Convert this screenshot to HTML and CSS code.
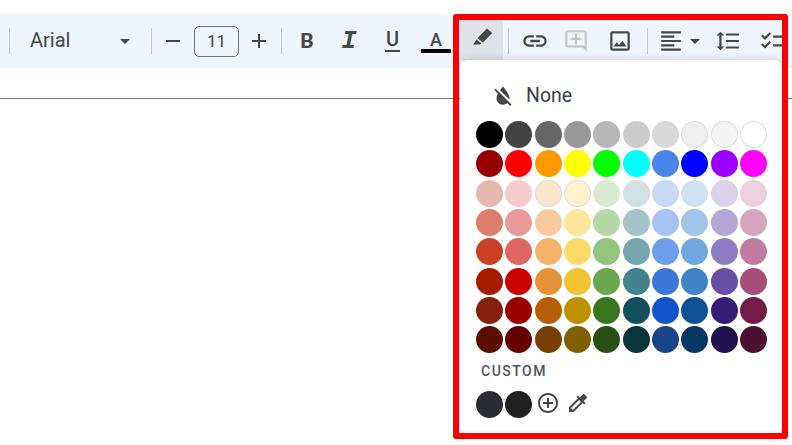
FILE: index.html
```html
<!DOCTYPE html>
<html lang="en">
<head>
    <meta charset="UTF-8">
    <title>Highlight color</title>
    <link rel="stylesheet" href="styles.css">
</head>
<body>
    <div class="toolbar">
        <span class="sep sep-first"></span>
        <div class="font-select">
            <span class="font-name">Arial</span>
            <span class="caret"></span>
        </div>
        <span class="sep"></span>
        <svg class="icon icon-minus" viewBox="0 0 24 24"><path d="M5 11h14v2H5z"/></svg>
        <div class="size-box">11</div>
        <svg class="icon icon-plus" viewBox="0 0 24 24"><path d="M19 13h-6v6h-2v-6H5v-2h6V5h2v6h6v2z"/></svg>
        <span class="sep sep-format"></span>
        <span class="fmt fmt-b">B</span>
        <span class="fmt fmt-i">I</span>
        <span class="fmt fmt-u">U</span>
        <span class="fmt fmt-a">A</span>
        <div class="pen-button">
            <svg class="icon" viewBox="0 0 24 24"><path d="M17 4.500 22.200 9 13 18.500 7.500 14zM6.500 15.500 11.500 19.500 10 20.500H3.200z"/></svg>
        </div>
        <span class="sep sep-link"></span>
        <svg class="icon icon-link" viewBox="0 0 24 24"><path d="M3.900 12c0-1.710 1.390-3.100 3.100-3.100h4V7H7c-2.760 0-5 2.240-5 5s2.240 5 5 5h4v-1.900H7c-1.710 0-3.100-1.390-3.100-3.100zM8 13h8v-2H8v2zm9-6h-4v1.900h4c1.710 0 3.100 1.390 3.100 3.100s-1.390 3.100-3.100 3.100h-4V17h4c2.760 0 5-2.240 5-5s-2.240-5-5-5z"/></svg>
        <svg class="icon icon-comment" viewBox="0 0 24 24"><path d="M22 4c0-1.100-.9-2-2-2H4c-1.100 0-2 .9-2 2v12c0 1.100.9 2 2 2h14l4 4V4zm-2 13.170L18.830 16H4V4h16v13.170zM13 5h-2v4H7v2h4v4h2v-4h4V9h-4z"/></svg>
        <svg class="icon icon-image" viewBox="0 0 24 24"><path d="M19 5v14H5V5h14m0-2H5c-1.100 0-2 .9-2 2v14c0 1.100.9 2 2 2h14c1.100 0 2-.9 2-2V5c0-1.100-.9-2-2-2zm-4.860 8.860l-3 3.870L9 13.140 6 17h12l-3.860-5.140z"/></svg>
        <span class="sep sep-align"></span>
        <svg class="icon icon-align" viewBox="0 0 24 24"><path d="M15 15H3v2h12v-2zm0-8H3v2h12V7zM3 13h18v-2H3v2zm0 8h18v-2H3v2zM3 3v2h18V3H3z"/></svg>
        <span class="caret caret-align"></span>
        <svg class="icon icon-spacing" viewBox="0 0 24 24"><path d="M6 7h2.500L5 3.500 1.500 7H4v10H1.500L5 20.500 8.500 17H6V7zm4-2v2h12V5H10zm0 14h12v-2H10v2zm0-6h12v-2H10v2z"/></svg>
        <svg class="icon icon-check" viewBox="0 0 24 24"><path d="M22 7h-9v2h9V7zm0 8h-9v2h9v-2zM5.540 11L2 7.460l1.410-1.410 2.120 2.120 4.240-4.240 1.410 1.410L5.540 11zm0 8L2 15.460l1.410-1.410 2.120 2.120 4.240-4.240 1.410 1.410L5.540 19z"/></svg>
    </div>
    <div class="ruler-line"></div>

    <div class="color-popup">
        <div class="none-row">
            <svg class="icon icon-none" viewBox="0 0 24 24"><path d="M18 14c0-4-6-10.800-6-10.800s-1.330 1.510-2.730 3.520l8.590 8.590c.09-.42.14-.86.14-1.310zm-.88 3.120L12.500 12.500 5.270 5.270 4 6.550l3.320 3.320C6.550 11.320 6 12.790 6 14c0 3.310 2.690 6 6 6 1.520 0 2.900-.57 3.960-1.500l2.630 2.630 1.270-1.270-2.740-2.740z"/></svg>
            <span>None</span>
        </div>
        <div class="swatches" id="swatches"></div>
        <div class="custom-label">CUSTOM</div>
        <div class="custom-row">
            <span class="swatch custom-one"></span>
            <span class="swatch custom-two"></span>
            <svg class="icon icon-add" viewBox="0 0 24 24"><path d="M13 7h-2v4H7v2h4v4h2v-4h4v-2h-4V7zm-1-5C6.480 2 2 6.480 2 12s4.480 10 10 10 10-4.480 10-10S17.520 2 12 2zm0 18c-4.410 0-8-3.590-8-8s3.590-8 8-8 8 3.590 8 8-3.590 8-8 8z"/></svg>
            <svg class="icon icon-dropper" viewBox="0 0 24 24"><path d="M20.710 5.630l-2.340-2.340c-.39-.39-1.020-.39-1.410 0l-3.120 3.120-1.930-1.910-1.410 1.410 1.420 1.420L3 16.250V21h4.750l8.920-8.920 1.420 1.420 1.410-1.410-1.920-1.920 3.120-3.120c.4-.4.4-1.030.01-1.420zM6.920 19L5 17.080l8.060-8.060 1.920 1.920L6.920 19z"/></svg>
        </div>
    </div>
    <div class="red-frame"></div>

    <script src="swatches.js"></script>
</body>
</html>
```

FILE: styles.css
```css
html, body {
    height: 100%;
}
body {
    margin: 0;
    padding-top: 14px;
    box-sizing: border-box;
    background: #fff;
    font-family: 'Roboto', sans-serif;
    color: #444746;
    overflow: hidden;
    position: relative;
}
.toolbar {
    display: flex;
    align-items: center;
    height: 54px;
    background: #f0f4fc;
    white-space: nowrap;
}
.icon {
    display: block;
    flex: none;
    width: 24px;
    height: 24px;
    fill: #444746;
}
.sep {
    flex: none;
    width: 1px;
    height: 26px;
    background: #c7c7c7;
}
.sep-first {
    margin-left: 9px;
}
.font-select {
    display: flex;
    align-items: center;
    width: 101px;
    margin-left: 20px;
    margin-right: 20px;
    font-size: 20px;
}
.font-name {
    width: 90px;
    margin-top: -3px;
}
.caret {
    flex: none;
    width: 0;
    height: 0;
    border-left: 5.500px solid transparent;
    border-right: 5.500px solid transparent;
    border-top: 5.500px solid #444746;
}
.icon-minus {
    margin-left: 9px;
}
.size-box {
    flex: none;
    width: 43px;
    height: 29px;
    margin-left: 9px;
    border: 1px solid #747775;
    border-radius: 5px;
    font-size: 17px;
    line-height: 29px;
    text-align: center;
}
.icon-plus {
    margin-left: 8px;
}
.sep-format {
    margin-left: 10px;
}
.fmt {
    flex: none;
    text-align: center;
    width: 24px;
}
.fmt-b {
    margin-left: 13px;
    font-size: 21px;
    font-weight: 700;
}
.fmt-i {
    margin-left: 18px;
    font-family: 'Liberation Mono', monospace;
    font-size: 25px;
    font-weight: 700;
    font-style: italic;
}
.fmt-u {
    margin-left: 24px;
    margin-top: -2px;
    font-size: 20px;
    font-weight: 500;
    line-height: 20px;
    border-bottom: 2px solid #444746;
    width: 15px;
    padding: 0 0 1px;
}
.fmt-a {
    width: 30px;
    margin-left: 21px;
    font-size: 18px;
    font-weight: 500;
    line-height: 19px;
    border-bottom: 4px solid #000;
}
.pen-button {
    flex: none;
    display: flex;
    justify-content: center;
    width: 43px;
    height: 40px;
    margin-top: -2px;
    margin-left: 9px;
    padding-top: 4px;
    box-sizing: border-box;
    background: #dfe3e8;
    border-radius: 4px 4px 0 0;
}
.sep-link {
    margin-left: 5px;
}
.icon-link {
    margin-left: 12px;
    width: 28px;
    height: 28px;
}
.icon-comment {
    margin-left: 14px;
    width: 26px;
    height: 26px;
    fill: #c4c7c5;
}
.icon-image {
    margin-left: 18px;
    width: 26px;
    height: 26px;
}
.sep-align {
    margin-left: 14px;
}
.icon-align {
    margin-left: 10px;
    width: 26px;
    height: 26px;
}
.caret-align {
    margin-left: 6px;
}
.icon-spacing {
    margin-left: 15px;
    width: 26px;
    height: 26px;
}
.icon-check {
    margin-left: 18px;
    width: 26px;
    height: 26px;
}
.ruler-line {
    height: 1px;
    margin-top: 30px;
    background: #777;
}
.color-popup {
    position: absolute;
    left: 460px;
    top: 60px;
    width: 322px;
    height: 374px;
    box-sizing: border-box;
    padding: 0 16px;
    background: #fff;
    border-radius: 8px;
    box-shadow: 0 1px 8px rgba(60, 64, 67, 0.3);
}
.none-row {
    display: flex;
    align-items: center;
    gap: 10px;
    height: 61px;
    box-sizing: border-box;
    padding-top: 10px;
    padding-left: 14px;
    font-size: 19.500px;
    color: #3c4043;
}
.icon-none {
    width: 26px;
    height: 26px;
}
.swatches {
    display: grid;
    grid-template-columns: repeat(10, 27px);
    column-gap: 2.330px;
    row-gap: 2.330px;
}
.swatch {
    display: block;
    flex: none;
    width: 27px;
    height: 27px;
    border-radius: 50%;
}
.swatch-light {
    box-shadow: inset 0 0 0 1px #ddd;
}
.custom-label {
    margin-top: 10px;
    margin-left: 5px;
    font-size: 14px;
    font-weight: 500;
    letter-spacing: 1.500px;
    line-height: 16px;
    color: #50545a;
}
.custom-row {
    display: flex;
    align-items: center;
    gap: 2.330px;
    margin-top: 12px;
}
.custom-one {
    background: #2b2b33;
}
.custom-two {
    background: #212121;
}
.icon-add {
    margin-left: 1px;
    margin-top: -4px;
}
.icon-dropper {
    margin-left: 4px;
    margin-top: -4px;
}
.red-frame {
    position: absolute;
    left: 453px;
    top: 14px;
    width: 335px;
    height: 425px;
    box-sizing: border-box;
    border: 6px solid #f00;
    border-radius: 3px;
}
```

FILE: swatches.js
```js
const palette = [
    '#000000', '#434343', '#666666', '#999999', '#b7b7b7', '#cccccc', '#d9d9d9', '#efefef', '#f3f3f3', '#ffffff',
    '#980000', '#ff0000', '#ff9900', '#ffff00', '#00ff00', '#00ffff', '#4a86e8', '#0000ff', '#9900ff', '#ff00ff',
    '#e6b8af', '#f4cccc', '#fce5cd', '#fff2cc', '#d9ead3', '#d0e0e3', '#c9daf8', '#cfe2f3', '#d9d2e9', '#ead1dc',
    '#dd7e6b', '#ea9999', '#f9cb9c', '#ffe599', '#b6d7a8', '#a2c4c9', '#a4c2f4', '#9fc5e8', '#b4a7d6', '#d5a6bd',
    '#cc4125', '#e06666', '#f6b26b', '#ffd966', '#93c47d', '#76a5af', '#6d9eeb', '#6fa8dc', '#8e7cc3', '#c27ba0',
    '#a61c00', '#cc0000', '#e69138', '#f1c232', '#6aa84f', '#45818e', '#3c78d8', '#3d85c6', '#674ea7', '#a64d79',
    '#85200c', '#990000', '#b45f06', '#bf9000', '#38761d', '#134f5c', '#1155cc', '#0b5394', '#351c75', '#741b47',
    '#5b0f00', '#660000', '#783f04', '#7f6000', '#274e13', '#0c343d', '#1c4587', '#073763', '#20124d', '#4c1130'
];
const lightColors = ['#efefef', '#f3f3f3', '#ffffff', '#fce5cd', '#fff2cc'];

const grid = document.getElementById('swatches');
palette.forEach(color => {
    const swatch = document.createElement('span');
    swatch.className = lightColors.includes(color) ? 'swatch swatch-light' : 'swatch';
    swatch.style.backgroundColor = color;
    grid.appendChild(swatch);
});
```
